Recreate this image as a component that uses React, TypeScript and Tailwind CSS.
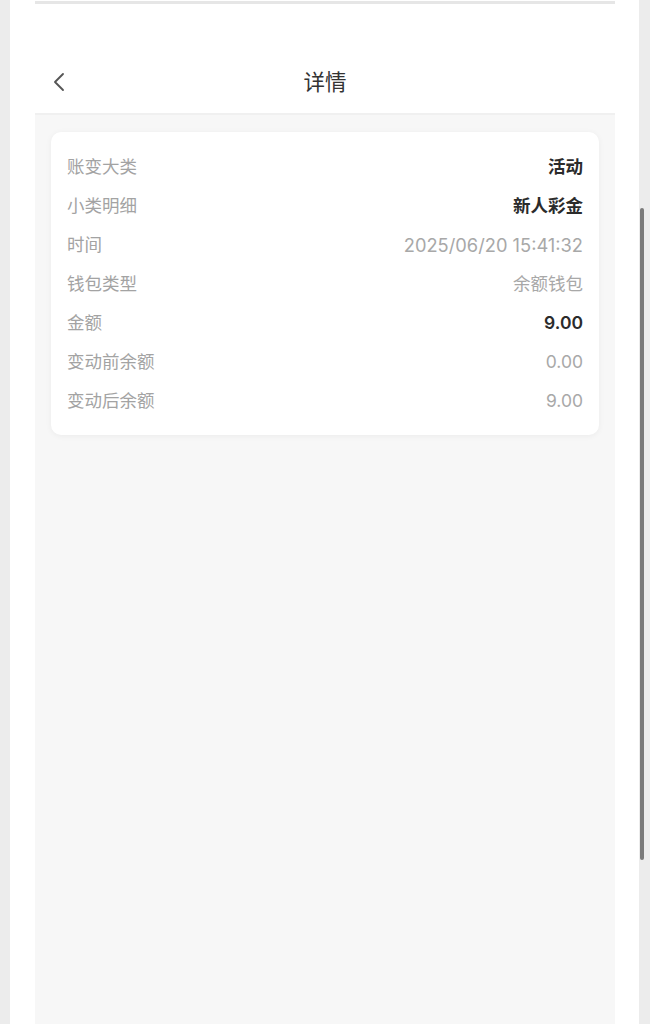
import { ChevronLeft } from "lucide-react";

const rows = [
  { label: "账变大类", value: "活动", strong: true },
  { label: "小类明细", value: "新人彩金", strong: true },
  { label: "时间", value: "2025/06/20 15:41:32" },
  { label: "钱包类型", value: "余额钱包" },
  { label: "金额", value: "9.00", strong: true },
  { label: "变动前余额", value: "0.00" },
  { label: "变动后余额", value: "9.00" },
];

export default function App() {
  return (
    <div
      className="h-[1024px] w-[650px] overflow-hidden bg-[#ececec] flex"
      style={{ fontFamily: 'Inter, "Noto Sans CJK SC", sans-serif' }}
    >
      <div className="w-[10px] shrink-0" />
      <div className="flex-1 bg-white flex">
        <div className="w-[25px] shrink-0" />
        <div className="w-[580px] flex flex-col">
          <div className="h-[3px] bg-[#e6e6e6] mt-[1px]" />
          <div className="h-[47px]" />
          <div className="h-[64px] relative flex items-center justify-center border-b-2 border-[#f0f0f0]">
            <ChevronLeft className="absolute left-[8px] top-[15px] text-[#555]" size={32} strokeWidth={1.4} />
            <span className="text-[21.5px] text-[#333]">详情</span>
          </div>
          <div className="flex-1 bg-[#f7f7f7] pt-[17px] px-[16px]">
            <div className="bg-white rounded-[10px] shadow-[0_1px_6px_rgba(0,0,0,0.05)] px-[16px] pt-[16px] pb-[14px]">
              {rows.map((r) => (
                <div key={r.label} className="h-[39px] flex items-center justify-between text-[17.5px]">
                  <span className="text-[#a3a3a3]">{r.label}</span>
                  <span
                    className={
                      r.strong
                        ? "font-semibold text-[#2b2b2b]"
                        : r.label === "时间"
                          ? "text-[#a8a8a8] text-[18.3px]"
                          : "text-[#a8a8a8]"
                    }
                  >
                    {r.value}
                  </span>
                </div>
              ))}
            </div>
          </div>
        </div>
        <div className="flex-1" />
      </div>
      <div className="w-[11px] shrink-0 relative">
        <div className="absolute left-[1px] top-[208px] h-[652px] w-[4px] rounded-full bg-[#7a7a7a]" />
      </div>
    </div>
  );
}
